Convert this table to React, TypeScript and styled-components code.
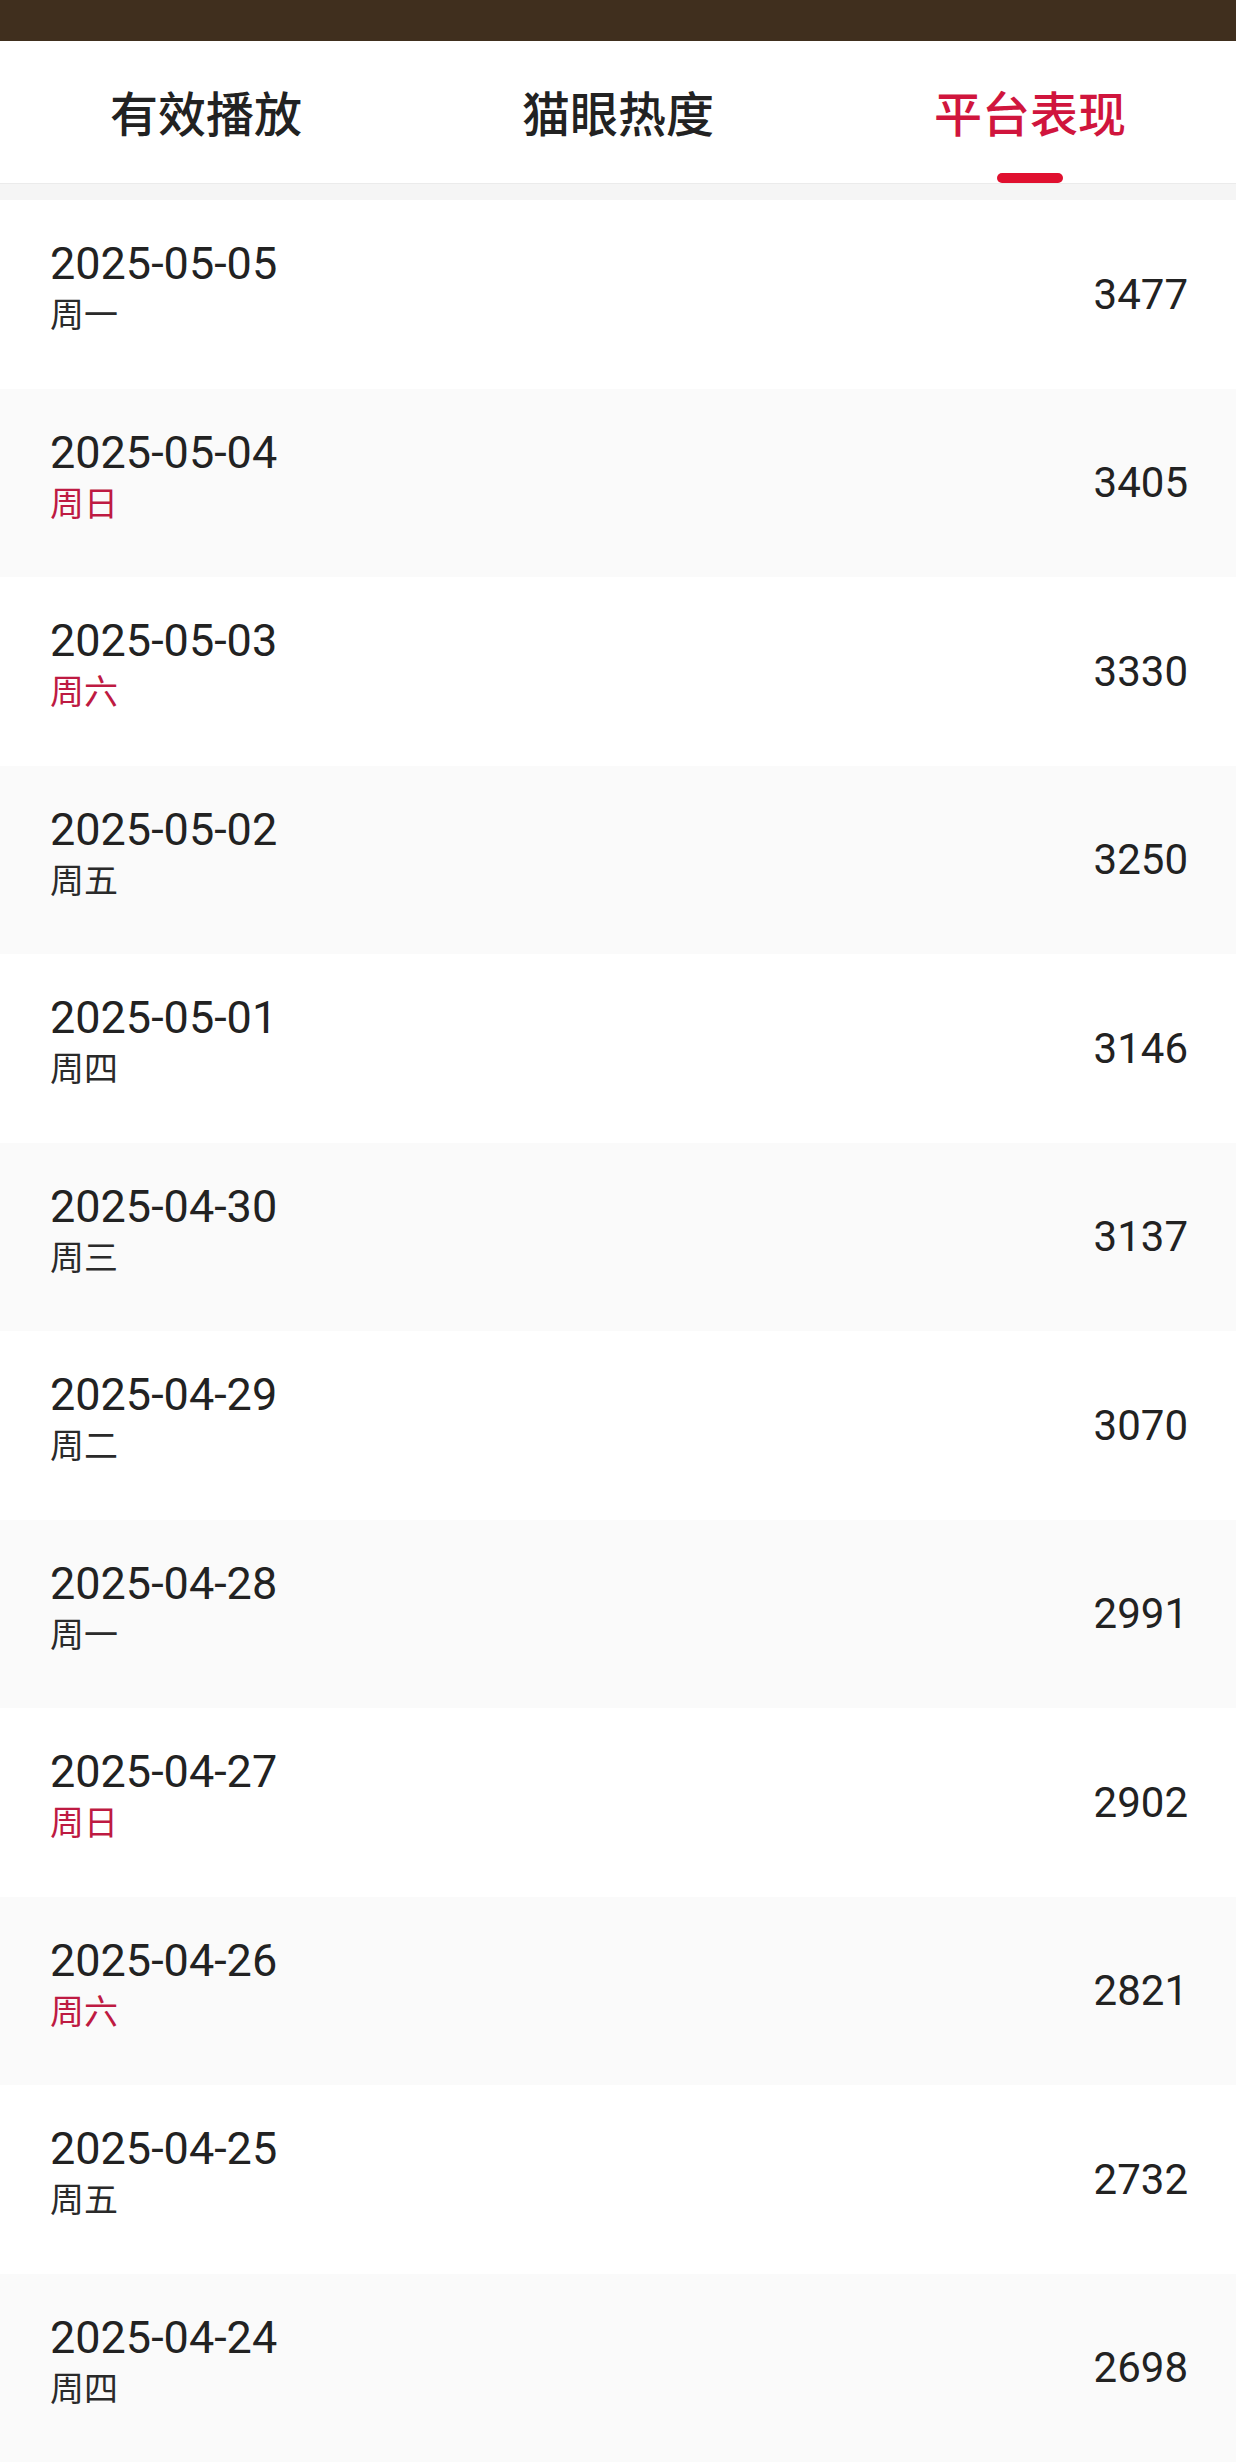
import React, { ReactElement } from 'react';
import styled, { createGlobalStyle } from 'styled-components';

type DayRow = {
  date: string;
  weekday: string;
  value: number;
};

const rows: DayRow[] = [
  { date: '2025-05-05', weekday: '周一', value: 3477 },
  { date: '2025-05-04', weekday: '周日', value: 3405 },
  { date: '2025-05-03', weekday: '周六', value: 3330 },
  { date: '2025-05-02', weekday: '周五', value: 3250 },
  { date: '2025-05-01', weekday: '周四', value: 3146 },
  { date: '2025-04-30', weekday: '周三', value: 3137 },
  { date: '2025-04-29', weekday: '周二', value: 3070 },
  { date: '2025-04-28', weekday: '周一', value: 2991 },
  { date: '2025-04-27', weekday: '周日', value: 2902 },
  { date: '2025-04-26', weekday: '周六', value: 2821 },
  { date: '2025-04-25', weekday: '周五', value: 2732 },
  { date: '2025-04-24', weekday: '周四', value: 2698 },
];

const tabs = ['有效播放', '猫眼热度', '平台表现'];
const activeTab = 2;

const isWeekend = (weekday: string): boolean => weekday === '周六' || weekday === '周日';

const App: React.FC = (): ReactElement => (
  <>
    <GlobalStyle />
    <Page>
      <StatusStrip />
      <TabBar>
        {tabs.map((label, i) => (
          <Tab key={label} active={i === activeTab}>
            {label}
            {i === activeTab && <Indicator />}
          </Tab>
        ))}
      </TabBar>
      <Gap />
      <List>
        {rows.map((row, i) => (
          <Row key={row.date} striped={i % 2 === 1}>
            <DateBlock>
              <DateText>{row.date}</DateText>
              <Weekday weekend={isWeekend(row.weekday)}>{row.weekday}</Weekday>
            </DateBlock>
            <Value>{row.value}</Value>
          </Row>
        ))}
      </List>
    </Page>
  </>
);

const GlobalStyle = createGlobalStyle`
  body {
    margin: 0;
    background: #ffffff;
    font-family: Roboto, "Noto Sans CJK SC", sans-serif;
  }
`;

const Page = styled.div`
  width: 1236px;
  display: flex;
  flex-direction: column;
  background: #ffffff;
`;

const StatusStrip = styled.div`
  height: 41px;
  background: #402f1e;
`;

const TabBar = styled.div`
  height: 142px;
  display: grid;
  grid-template-columns: repeat(3, 1fr);
  border-bottom: 1px solid #ebebeb;
  background: #ffffff;
`;

const Tab = styled.div<{ active: boolean }>`
  position: relative;
  display: flex;
  align-items: center;
  justify-content: center;
  padding-bottom: 2px;
  font-family: "Noto Sans CJK SC", sans-serif;
  font-size: 48px;
  font-weight: 500;
  color: ${({ active }) => (active ? '#d0153d' : '#222222')};
`;

const Indicator = styled.span`
  position: absolute;
  bottom: 0;
  left: 50%;
  width: 66px;
  height: 10px;
  margin-left: -33px;
  border-radius: 5px;
  background: #e0102f;
`;

const Gap = styled.div`
  height: 16px;
  background: #f5f5f5;
`;

const List = styled.div`
  display: flex;
  flex-direction: column;
`;

const Row = styled.div<{ striped: boolean }>`
  height: 188.5px;
  display: flex;
  align-items: center;
  justify-content: space-between;
  padding: 0 48px 0 50px;
  box-sizing: border-box;
  background: ${({ striped }) => (striped ? '#fafafa' : '#ffffff')};
`;

const DateBlock = styled.div`
  display: flex;
  flex-direction: column;
  margin-bottom: 16px;
`;

const DateText = styled.div`
  font-family: Roboto, sans-serif;
  font-size: 45px;
  line-height: 52px;
  color: #222222;
`;

const Weekday = styled.div<{ weekend: boolean }>`
  margin-top: 2px;
  font-family: "Noto Sans CJK SC", sans-serif;
  font-size: 34px;
  line-height: 42px;
  color: ${({ weekend }) => (weekend ? '#be1a42' : '#2a2a2a')};
`;

const Value = styled.div`
  font-family: Roboto, sans-serif;
  font-size: 42px;
  color: #222222;
`;

export default App;
